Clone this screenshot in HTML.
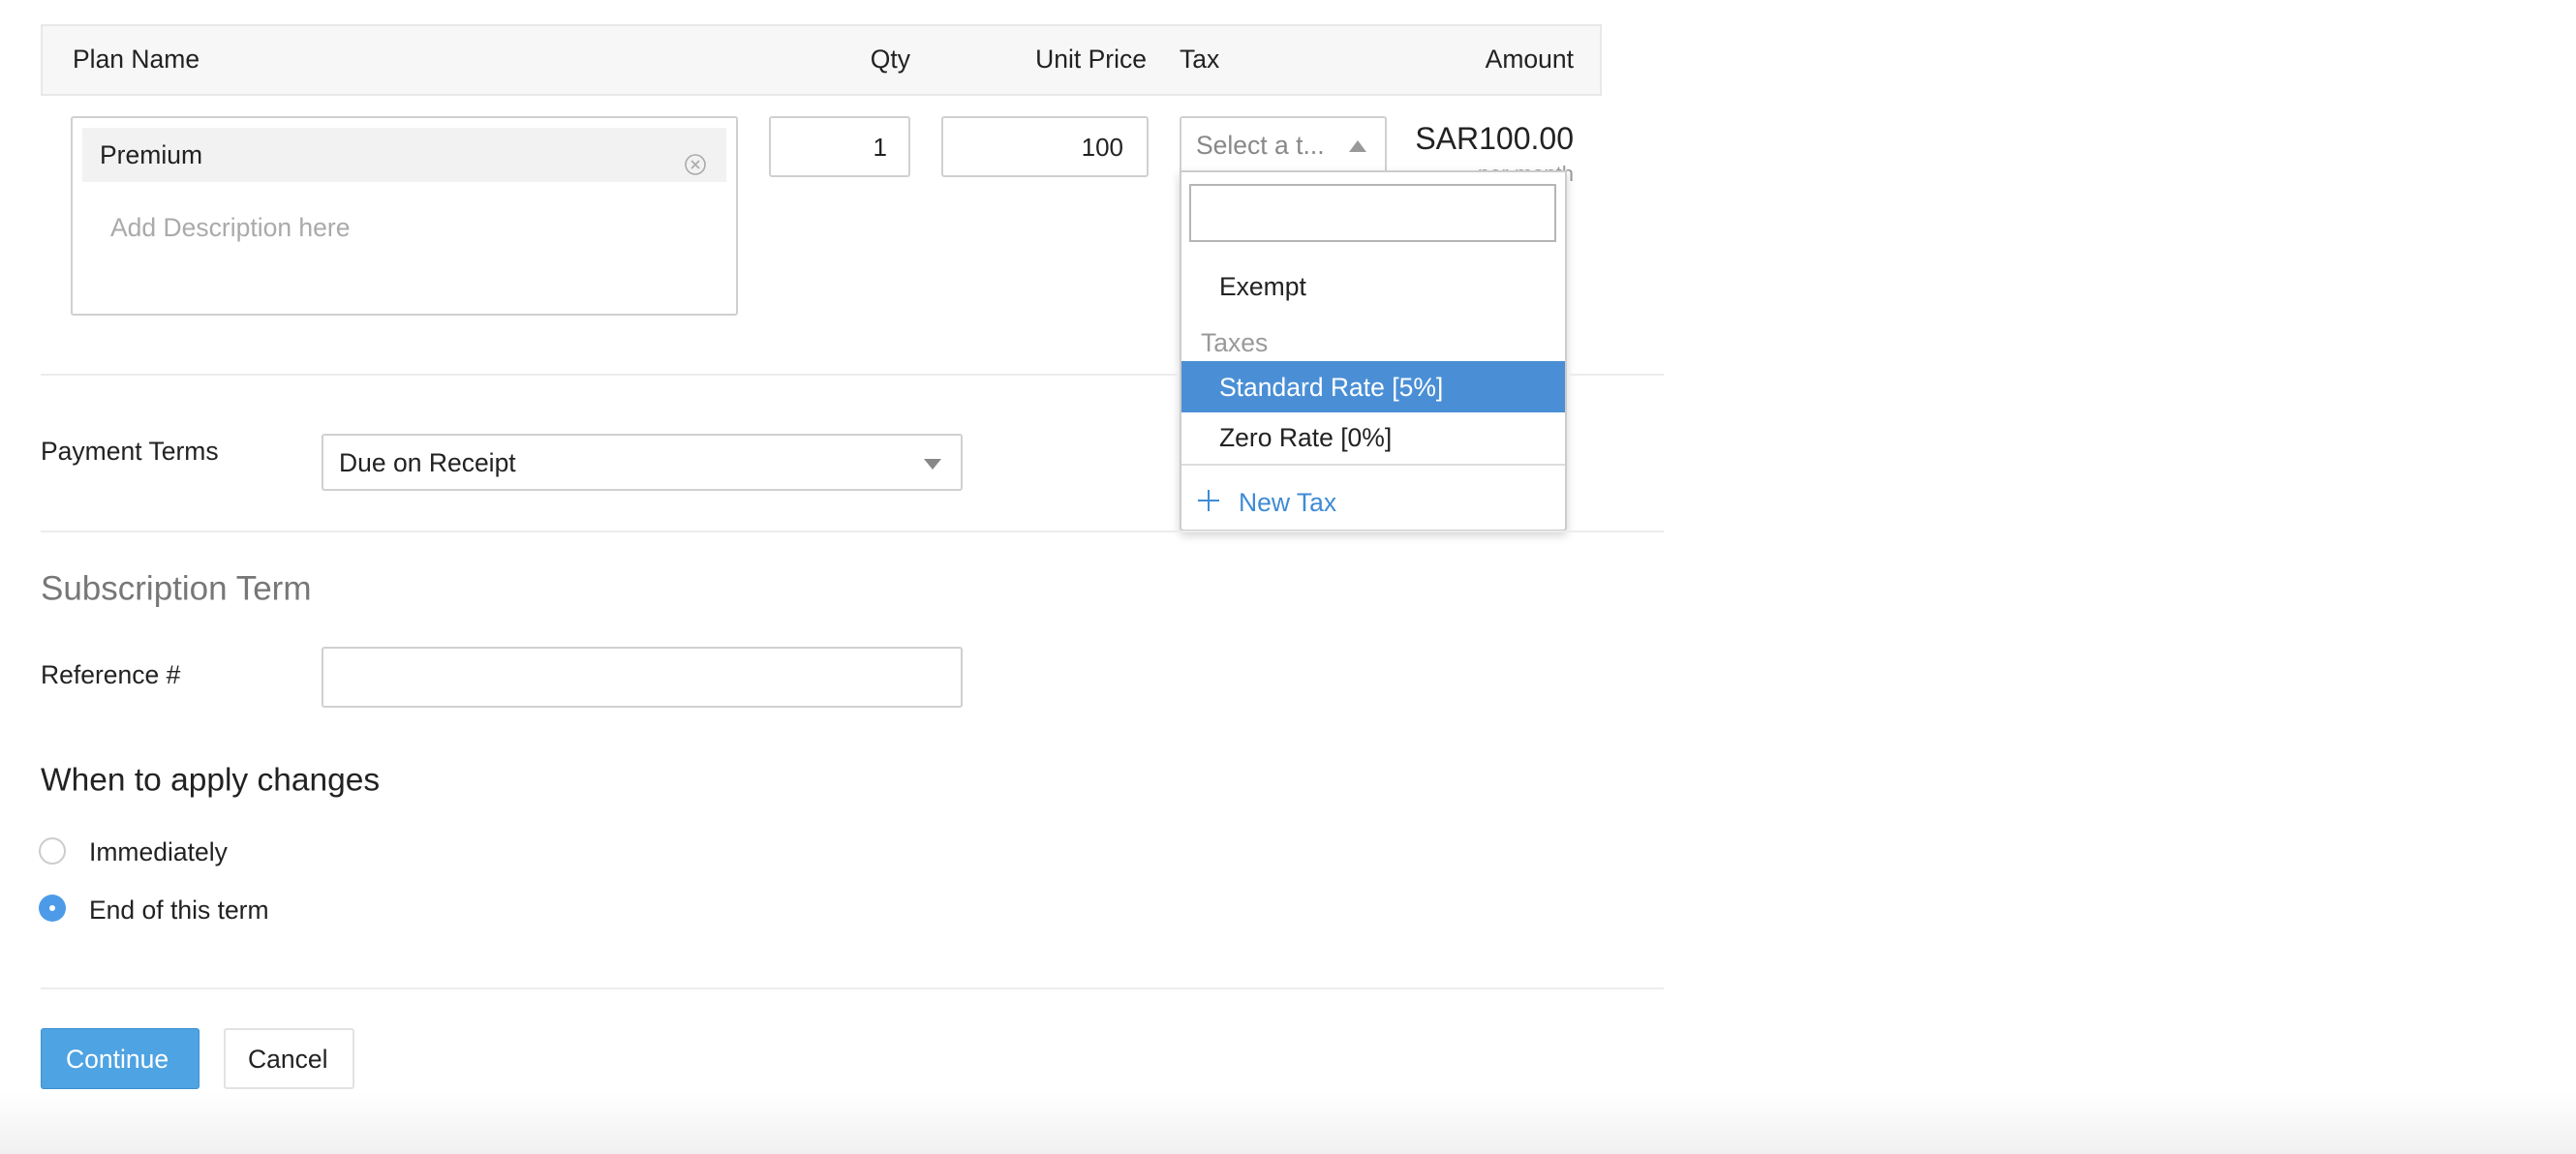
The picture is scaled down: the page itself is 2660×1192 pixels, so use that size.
<!DOCTYPE html>
<html><head><meta charset="utf-8"><style>
*{box-sizing:border-box;margin:0;padding:0}
body{width:2660px;height:1192px;position:relative;background:#fff;font-family:"Liberation Sans",Arial,sans-serif;color:#222;font-size:26.5px;overflow:hidden}
.a{position:absolute;white-space:nowrap}
.box{position:absolute;border:2px solid #d0d0d0;border-radius:3px;background:#fff}
.line{position:absolute;left:42px;width:1676px;height:2px;background:#ececec}
.t{position:absolute;line-height:1;transform:translateY(-50%);white-space:nowrap}
</style></head><body>
<div class="a" style="left:42px;top:25px;width:1612px;height:74px;background:#f7f7f7;border:2px solid #e8e8e8"></div>
<div class="t" style="left:75px;top:61px">Plan Name</div>
<div class="t" style="right:1720px;top:61px">Qty</div>
<div class="t" style="right:1476px;top:61px">Unit Price</div>
<div class="t" style="left:1218px;top:61px">Tax</div>
<div class="t" style="right:1035px;top:61px">Amount</div>

<div class="box" style="left:73px;top:120px;width:689px;height:206px"></div>
<div class="a" style="left:85px;top:132px;width:665px;height:56px;background:#f2f2f2"></div>
<div class="t" style="left:103px;top:160px">Premium</div>
<svg class="a" style="left:705px;top:157px" width="26" height="26" viewBox="0 0 26 26"><circle cx="13" cy="13" r="10" fill="none" stroke="#aaa" stroke-width="1.6"/><path d="M9 9L17 17M17 9L9 17" stroke="#aaa" stroke-width="1.6"/></svg>
<div class="t" style="left:114px;top:235px;color:#aaa">Add Description here</div>

<div class="box" style="left:794px;top:120px;width:146px;height:63px"></div>
<div class="t" style="right:1744px;top:152px;font-size:26px">1</div>
<div class="box" style="left:972px;top:120px;width:214px;height:63px"></div>
<div class="t" style="right:1500px;top:152px;font-size:26px">100</div>
<div class="box" style="left:1218px;top:120px;width:214px;height:60px"></div>
<div class="t" style="left:1235px;top:150px;color:#888">Select a t...</div>
<svg class="a" style="left:1393px;top:144px" width="18" height="14"><path d="M0 13L9 1L18 13Z" fill="#999"/></svg>
<div class="t" style="right:1035px;top:143px;font-size:32px">SAR100.00</div>
<div class="t" style="right:1035px;top:180px;color:#999;font-size:22px">per month</div>

<div class="a" style="left:1218px;top:176px;width:400px;height:373px;background:#fff;border:2px solid #ccc;border-radius:0 0 4px 4px;box-shadow:0 4px 10px rgba(0,0,0,.18)"></div>
<div class="a" style="left:1228px;top:190px;width:379px;height:60px;border:2px solid #b5b5b5"></div>
<div class="t" style="left:1259px;top:296px">Exempt</div>
<div class="t" style="left:1240px;top:354px;color:#999">Taxes</div>
<div class="a" style="left:1220px;top:373px;width:396px;height:53px;background:#4a8fd5"></div>
<div class="t" style="left:1259px;top:400px;color:#fff">Standard Rate [5%]</div>
<div class="t" style="left:1259px;top:452px">Zero Rate [0%]</div>
<div class="a" style="left:1220px;top:479px;width:396px;height:2px;background:#ddd"></div>
<svg class="a" style="left:1236px;top:505px" width="24" height="24"><path d="M12 1V23M1 12H23" stroke="#3f8bd4" stroke-width="2"/></svg>
<div class="t" style="left:1279px;top:519px;color:#3f8bd4">New Tax</div>

<div class="line" style="top:386px;width:1176px"></div>
<div class="a" style="left:1618px;top:386px;width:100px;height:2px;background:#ececec"></div>
<div class="t" style="left:42px;top:466px">Payment Terms</div>
<div class="box" style="left:332px;top:448px;width:662px;height:59px"></div>
<div class="t" style="left:350px;top:478px">Due on Receipt</div>
<svg class="a" style="left:954px;top:473px" width="18" height="12"><path d="M0 1L18 1L9 12Z" fill="#888"/></svg>
<div class="line" style="top:548px"></div>

<div class="t" style="left:42px;top:608px;font-size:35px;color:#777">Subscription Term</div>
<div class="t" style="left:42px;top:697px">Reference #</div>
<div class="box" style="left:332px;top:668px;width:662px;height:63px"></div>

<div class="t" style="left:42px;top:806px;font-size:33.5px">When to apply changes</div>
<div class="a" style="left:40px;top:865px;width:28px;height:28px;border:2px solid #ccc;border-radius:50%"></div>
<div class="t" style="left:92px;top:880px">Immediately</div>
<div class="a" style="left:40px;top:924px;width:28px;height:28px;border-radius:50%;background:#4d9be8"></div>
<div class="a" style="left:51px;top:935px;width:6px;height:6px;border-radius:50%;background:#fff"></div>
<div class="t" style="left:92px;top:940px">End of this term</div>
<div class="line" style="top:1020px"></div>

<div class="a" style="left:42px;top:1062px;width:164px;height:63px;background:#4ea3e3;border:1px solid #3d8fd0;border-radius:3px"></div>
<div class="t" style="left:68px;top:1094px;color:#fff">Continue</div>
<div class="a" style="left:231px;top:1062px;width:135px;height:63px;background:#fff;border:2px solid #e2e2e2;border-radius:3px"></div>
<div class="t" style="left:256px;top:1094px">Cancel</div>
<div class="a" style="left:0;top:1128px;width:2660px;height:64px;background:linear-gradient(#fff,#f0f0f0)"></div>
</body></html>
